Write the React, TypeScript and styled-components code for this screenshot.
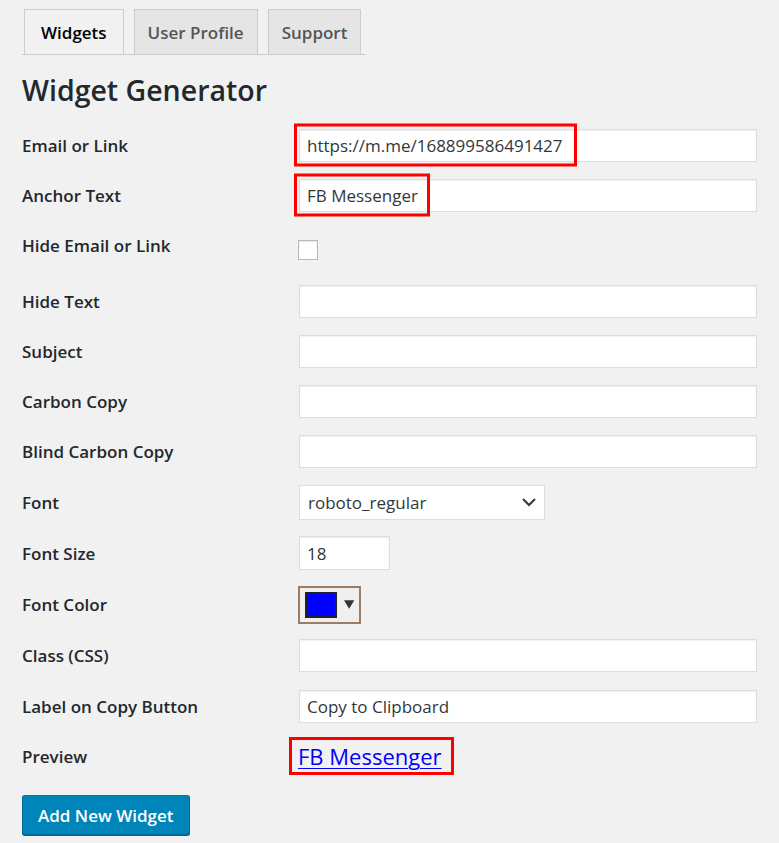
import React from "react";
import styled, { createGlobalStyle } from "styled-components";

/**
 * Global
 */

const GlobalStyle = createGlobalStyle`
  html, body {
    margin: 0;
    padding: 0;
    background: #f1f1f1;
  }

  body {
    color: #23282d;
    font-family: "Open Sans", "Noto Sans", "Liberation Sans", sans-serif;
    font-size: 17px;
  }
`;

/**
 * Styled Component
 */

const Page = styled.div`
  padding: 9px 22px 8px 22px;
  box-sizing: border-box;
  width: 779px;
`;

/* Tabs */
const TabBar = styled.nav`
  display: flex;
  gap: 10px;
  width: 344px;
  padding-left: 2px;
  border-bottom: 1px solid #ccc;
  box-sizing: border-box;
`;

const Tab = styled.a<{ $active?: boolean }>`
  display: flex;
  flex-shrink: 0;
  align-items: center;
  justify-content: center;
  height: 45px;
  padding: 0 ${(p) => (p.$active ? "16px" : "13px")};
  border: 1px solid #ccc;
  border-bottom: none;
  margin-bottom: ${(p) => (p.$active ? "-1px" : "0")};
  background: ${(p) => (p.$active ? "#f1f1f1" : "#e5e5e5")};
  color: ${(p) => (p.$active ? "#000" : "#555")};
  font-size: 17px;
  font-weight: 600;
  white-space: nowrap;
  text-decoration: none;
  box-sizing: border-box;
`;

const Title = styled.h1`
  margin: 17px 0 0;
  font-size: 28.5px;
  font-weight: 600;
  line-height: 36px;
  color: #23282d;
`;

/* Form */
const Form = styled.div`
  display: flex;
  flex-direction: column;
  margin-top: 12px;
`;

const Row = styled.div<{ $height?: number }>`
  display: grid;
  grid-template-columns: 277px 1fr;
  align-items: center;
  height: ${(p) => p.$height ?? 50}px;
`;

const Label = styled.label<{ $shift?: number }>`
  font-size: 17px;
  font-weight: 600;
  color: #23282d;
  position: relative;
  top: ${(p) => p.$shift ?? 0}px;
`;

const Field = styled.div`
  position: relative;
  display: flex;
  align-items: center;
`;

const TextInput = styled.input<{ $width?: number }>`
  width: ${(p) => (p.$width ? `${p.$width}px` : "100%")};
  height: ${(p) => (p.$width ? 34 : 33)}px;
  box-sizing: border-box;
  padding: 0 7px;
  border: 1px solid #ddd;
  box-shadow: inset 0 1px 2px rgba(0, 0, 0, 0.07);
  background: #fff;
  color: #32373c;
  font-family: "Open Sans", "Noto Sans", sans-serif;
  font-size: 17px;
  outline: none;
`;

const Highlight = styled.span<{ $width: number; $height: number }>`
  position: absolute;
  left: -5px;
  top: 50%;
  width: ${(p) => p.$width}px;
  height: ${(p) => p.$height}px;
  transform: translateY(-50%);
  border: 3px solid #f00;
  box-sizing: border-box;
  pointer-events: none;
`;

const Checkbox = styled.span`
  display: block;
  width: 20px;
  height: 20px;
  margin-top: 4px;
  margin-left: -1px;
  box-sizing: border-box;
  border: 1px solid #b4b9be;
  background: #fff;
  box-shadow: inset 0 1px 2px rgba(0, 0, 0, 0.1);
`;

const Select = styled.div`
  display: flex;
  align-items: center;
  justify-content: space-between;
  width: 246px;
  height: 35px;
  box-sizing: border-box;
  padding: 0 8px 0 8px;
  border: 1px solid #ddd;
  background: #fff;
  color: #32373c;
  font-size: 17px;
`;

const ColorButton = styled.div`
  display: flex;
  align-items: center;
  gap: 7px;
  width: 63px;
  height: 38px;
  margin-left: -1px;
  box-sizing: border-box;
  padding: 0 5px;
  border: 2px solid #9b7c64;
  background: #efefef;
`;

const Swatch = styled.span<{ $color: string }>`
  display: block;
  width: 34px;
  height: 26px;
  box-sizing: border-box;
  border: 2px solid #222;
  background: ${(p) => p.$color};
`;

const PreviewLink = styled.a`
  margin-left: -1px;
  color: #00f;
  font-size: 22px;
  text-decoration: underline;
  text-underline-offset: 3px;
  text-decoration-thickness: 1px;
`;

const PreviewBox = styled.span`
  position: absolute;
  left: -10px;
  top: 50%;
  transform: translateY(-50%);
  width: 165px;
  height: 38px;
  border: 3px solid #f00;
  box-sizing: border-box;
`;

const Button = styled.button`
  margin-top: 14px;
  align-self: flex-start;
  height: 40px;
  padding: 0 15px;
  border: 1px solid #0073aa;
  border-color: #0073aa #006799 #006799;
  border-radius: 3px;
  box-shadow: 0 1px 0 #006799;
  background: #0085ba;
  color: #fff;
  font-family: "Open Sans", "Noto Sans", sans-serif;
  font-size: 17px;
  font-weight: 600;
`;

/**
 * Data
 */

const plainFields = [
  { label: "Hide Text", height: 50 },
  { label: "Subject", height: 50 },
  { label: "Carbon Copy", height: 50 },
  { label: "Blind Carbon Copy", height: 51 },
];

/**
 * Template
 */

export default function App() {
  return (
    <Page>
      <GlobalStyle />
      <TabBar>
        <Tab $active>Widgets</Tab>
        <Tab>User Profile</Tab>
        <Tab>Support</Tab>
      </TabBar>
      <Title>Widget Generator</Title>
      <Form>
        <Row>
          <Label>Email or Link</Label>
          <Field>
            <TextInput readOnly value="https://m.me/168899586491427" />
            <Highlight $width={283} $height={43} />
          </Field>
        </Row>
        <Row>
          <Label>Anchor Text</Label>
          <Field>
            <TextInput readOnly value="FB Messenger" />
            <Highlight $width={136} $height={43} />
          </Field>
        </Row>
        <Row $height={56}>
          <Label $shift={-3}>Hide Email or Link</Label>
          <Field>
            <Checkbox />
          </Field>
        </Row>
        {plainFields.map((f) => (
          <Row key={f.label} $height={f.height}>
            <Label>{f.label}</Label>
            <Field>
              <TextInput readOnly value="" />
            </Field>
          </Row>
        ))}
        <Row>
          <Label>Font</Label>
          <Field>
            <Select>
              <span>roboto_regular</span>
              <svg width="14" height="9" viewBox="0 0 14 9">
                <path d="M1 1l6 6 6-6" fill="none" stroke="#32373c" strokeWidth="2" />
              </svg>
            </Select>
          </Field>
        </Row>
        <Row $height={52}>
          <Label>Font Size</Label>
          <Field>
            <TextInput readOnly value="18" $width={91} />
          </Field>
        </Row>
        <Row $height={51}>
          <Label>Font Color</Label>
          <Field>
            <ColorButton>
              <Swatch $color="#0000ff" />
              <svg width="11" height="9" viewBox="0 0 11 9">
                <path d="M0 0h11L5.5 9z" fill="#333" />
              </svg>
            </ColorButton>
          </Field>
        </Row>
        <Row $height={51}>
          <Label>Class (CSS)</Label>
          <Field>
            <TextInput readOnly value="" />
          </Field>
        </Row>
        <Row>
          <Label>Label on Copy Button</Label>
          <Field>
            <TextInput readOnly value="Copy to Clipboard" />
          </Field>
        </Row>
        <Row>
          <Label>Preview</Label>
          <Field>
            <PreviewLink href="#">FB Messenger</PreviewLink>
            <PreviewBox />
          </Field>
        </Row>
        <Button>Add New Widget</Button>
      </Form>
    </Page>
  );
}
